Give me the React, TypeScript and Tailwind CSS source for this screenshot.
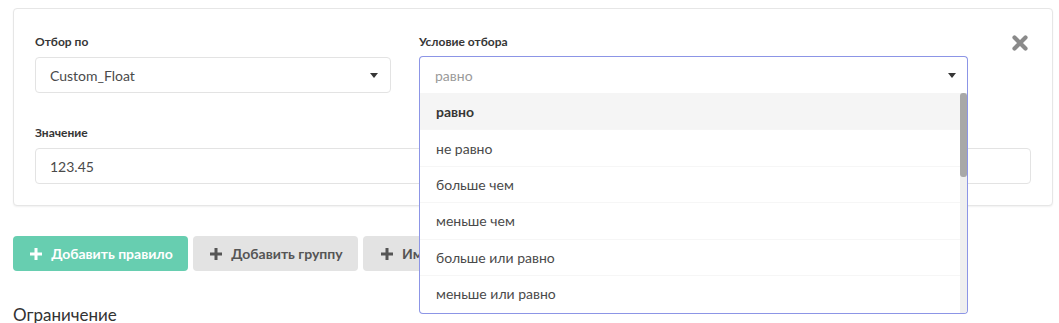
import React from 'react'

const font = { fontFamily: 'Lato, "Open Sans", "Liberation Sans", sans-serif' }

const options = ['равно', 'не равно', 'больше чем', 'меньше чем', 'больше или равно', 'меньше или равно']

function Caret() {
  return (
    <svg width="8" height="5" viewBox="0 0 8 5" className="shrink-0">
      <path d="M0 0h8L4 5z" fill="#363636" />
    </svg>
  )
}

function Plus({ color }: { color: string }) {
  return (
    <svg width="12" height="12" viewBox="0 0 12 12" className="shrink-0">
      <path d="M4.5 0h3v4.5H12v3H7.5V12h-3V7.5H0v-3h4.5z" fill={color} />
    </svg>
  )
}

export default function App() {
  return (
    <div className="min-h-[323px] overflow-hidden bg-white pl-[13px] pr-[6px] pt-[8px] text-[#363636]" style={font}>
      {/* Rule card */}
      <div className="rounded-[4px] border border-[#e6e6e6] bg-white px-[21px] pt-[25px] pb-[21px] shadow-[0_1px_2px_rgba(0,0,0,0.06)]">
        <div className="grid grid-cols-[356px_549px_1fr] gap-x-[28px]">
          <div>
            <label className="block h-[16px] text-[12px] font-bold leading-[16px]">Отбор по</label>
            <div className="mt-[7px] flex h-[36px] items-center justify-between rounded-[4px] border border-[#e3e3e3] pl-[14px] pr-[12px] text-[14px] text-[#4a4a4a]">
              <span>Custom_Float</span>
              <Caret />
            </div>
          </div>
          <div className="relative">
            <label className="block h-[16px] text-[12px] font-bold leading-[16px]">Условие отбора</label>
            <div className="mt-[6px] flex h-[37px] items-center justify-between rounded-t-[4px] border-x border-t border-[#8c95e6] pl-[15px] pr-[11px] text-[14px] text-[#9a9a9a]">
              <span>равно</span>
              <Caret />
            </div>
            {/* Open dropdown list */}
            <div className="absolute left-0 right-0 top-[59px] z-10 flex h-[221px] overflow-hidden rounded-b-[4px] border-x border-b border-[#8c95e6] bg-white">
              <div className="flex-1">
                {options.map((o, i) => (
                  <div
                    key={o}
                    className={
                      i === 0
                        ? 'flex h-[36.4px] items-center bg-[#f5f5f5] pl-[16px] text-[14px] font-bold text-[#363636]'
                        : 'flex h-[36.4px] items-center border-t border-[#f6f6f6] pl-[16px] text-[14px] text-[#4a4a4a]'
                    }
                  >
                    {o}
                  </div>
                ))}
              </div>
              <div className="w-[7px] bg-[#efefef]">
                <div className="h-[84px] rounded-[3px] bg-[#a8a8a8]" />
              </div>
            </div>
          </div>
          <div className="flex justify-end pr-[3px] pt-[1px]">
            <svg width="16" height="16" viewBox="0 0 16 16">
              <path d="M2.5 2.5l11 11M13.5 2.5l-11 11" stroke="#8a8a8a" strokeWidth="4.2" strokeLinecap="round" />
            </svg>
          </div>
        </div>

        <div className="mt-[32px]">
          <label className="block h-[16px] text-[12px] font-bold leading-[16px]">Значение</label>
          <div className="mt-[7px] flex h-[36px] items-center rounded-[4px] border border-[#e3e3e3] pl-[14px] text-[14px] text-[#4a4a4a]">
            123.45
          </div>
        </div>
      </div>

      {/* Actions */}
      <div className="mt-[30px] flex gap-[5px]">
        <button className="flex h-[35px] w-[175px] items-center justify-center gap-[9px] rounded-[4px] bg-[#67ceb0] pl-[2px] text-[14px] font-bold text-white">
          <Plus color="#ffffff" />
          Добавить правило
        </button>
        <button className="flex h-[35px] w-[165px] items-center justify-center gap-[9px] rounded-[4px] bg-[#e3e3e3] pl-[2px] text-[14px] font-bold text-[#555]">
          <Plus color="#555555" />
          Добавить группу
        </button>
        <button className="flex h-[35px] items-center justify-center gap-[9px] rounded-[4px] bg-[#e3e3e3] px-[18px] text-[14px] font-bold text-[#555]">
          <Plus color="#555555" />
          Импорт
        </button>
      </div>

      <h3 className="mt-[33px] text-[17px] font-normal leading-[22px] text-[#333]">Ограничение</h3>
    </div>
  )
}
